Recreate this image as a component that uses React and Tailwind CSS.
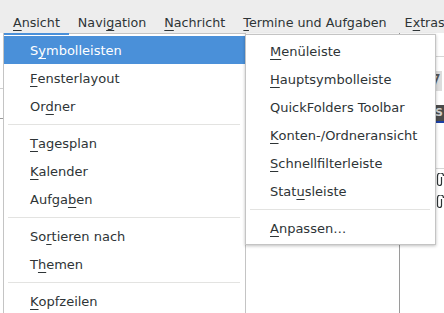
import React from 'react';

const U = ({ children }) => (
    <span className="underline decoration-1 underline-offset-[3px]">{children}</span>
);

const topMenus = [
    { pre: '', key: 'A', post: 'nsicht', active: true },
    { pre: 'Navi', key: 'g', post: 'ation' },
    { pre: '', key: 'N', post: 'achricht' },
    { pre: '', key: 'T', post: 'ermine und Aufgaben' },
    { pre: 'E', key: 'x', post: 'tras' },
];

const viewMenu = [
    { pre: 'S', key: 'y', post: 'mbolleisten', active: true },
    { pre: '', key: 'F', post: 'ensterlayout' },
    { pre: 'Or', key: 'd', post: 'ner' },
    'sep',
    { pre: '', key: 'T', post: 'agesplan' },
    { pre: '', key: 'K', post: 'alender' },
    { pre: 'Aufga', key: 'b', post: 'en' },
    'sep',
    { pre: 'So', key: 'r', post: 'tieren nach' },
    { pre: 'T', key: 'h', post: 'emen' },
    'sep',
    { pre: '', key: 'K', post: 'opfzeilen' },
    { pre: '', key: 'N', post: 'achrichteninhalt' },
];

const toolbarMenu = [
    { pre: '', key: 'M', post: 'enüleiste' },
    { pre: '', key: 'H', post: 'auptsymbolleiste' },
    { pre: 'QuickFolders Toolbar', key: '', post: '' },
    { pre: '', key: 'K', post: 'onten-/Ordneransicht' },
    { pre: '', key: 'S', post: 'chnellfilterleiste' },
    { pre: 'Stat', key: 'u', post: 'sleiste' },
    'sep',
    { pre: '', key: 'A', post: 'npassen…' },
];

const MenuList = ({ items, pad }) => (
    <>
        {items.map((it, i) =>
            it === 'sep' ? (
                <div key={i} className="h-[9px] flex items-center ml-[4px] mr-[5px]">
                    <div className="h-px w-full bg-[#e3e3e1]"></div>
                </div>
            ) : (
                <div
                    key={i}
                    className={`h-[28px] pt-[2px] flex items-center whitespace-nowrap ${pad} ${it.active ? 'bg-[#4a90d9] text-white' : ''}`}
                >
                    {it.pre}
                    {it.key && <U>{it.key}</U>}
                    {it.post}
                </div>
            )
        )}
    </>
);

const Clip = () => (
    <svg width="9" height="14" viewBox="0 0 9 14" fill="none" stroke="#2e3436" strokeWidth="1.2">
        <path d="M6.5 4v6.5a2 2 0 0 1-4 0V3a3 3 0 0 1 6 0" />
    </svg>
);

export default function App() {
    return (
        <div className="relative w-[444px] h-[313px] overflow-hidden bg-white font-['DejaVu_Sans',sans-serif] text-[13px] text-[#2e3436]">
            {/* Menubar */}
            <nav className="h-[33px] bg-[#ededed] flex pl-[4px] pt-[12px] text-[12.7px]">
                {topMenus.map((m, i) => (
                    <div key={i} className="relative px-[9px] leading-[21px] whitespace-nowrap">
                        {m.pre}
                        <U>{m.key}</U>
                        {m.post}
                        {m.active && <span className="absolute left-0 right-0 -bottom-[2px] h-[2px] bg-[#4a90d9] z-20"></span>}
                    </div>
                ))}
            </nav>

            {/* Window content behind the menus */}
            <div className="flex h-[280px]">
                <div className="w-[400px] border-r border-[#9a9a9a] flex">
                    <div className="w-[3px] flex flex-col">
                        <div className="h-[56px] border-b border-[#cfcfcf]"></div>
                        <div className="h-[30px] border-b border-[#9a9a9a]"></div>
                        <div className="flex-1"></div>
                    </div>
                    <div className="flex-1"></div>
                </div>
                <div className="flex-1 flex flex-col">
                    <div className="h-[24px] border-b border-[#d6d6d6]"></div>
                    <div className="h-[14px]"></div>
                    <div className="h-[20px] mx-[2px] bg-[#dcdcdc] text-[#555] text-[20px] leading-[20px] text-right pr-[1px] font-['DejaVu_Sans_Mono',monospace] overflow-hidden">7</div>
                    <div className="h-[14px]"></div>
                    <div className="h-[16px] bg-[#4b4b4b] text-[#cfcfcf] text-[11px] leading-[16px] text-right pr-[1px] font-bold overflow-hidden">S</div>
                    <div className="h-[2px] bg-[#1c3fa5]"></div>
                    <div className="h-[46px] border-b border-[#d6d6d6]"></div>
                    <div className="h-[22px] flex items-center justify-end"><Clip /></div>
                    <div className="h-[22px] flex items-center justify-end"><Clip /></div>
                </div>
            </div>

            {/* Ansicht menu */}
            <div className="absolute left-[3px] top-[33px] w-[243px] h-[300px] bg-white border border-[#c4c4c4] py-[2px]">
                <MenuList items={viewMenu} pad="pl-[26px]" />
            </div>

            {/* Symbolleisten submenu */}
            <div className="absolute left-[245px] top-[34px] w-[191px] bg-white border border-[#c4c4c4] py-[2px] shadow-[0_1px_3px_rgba(0,0,0,0.25)]">
                <MenuList items={toolbarMenu} pad="pl-[24px]" />
            </div>
        </div>
    );
}
